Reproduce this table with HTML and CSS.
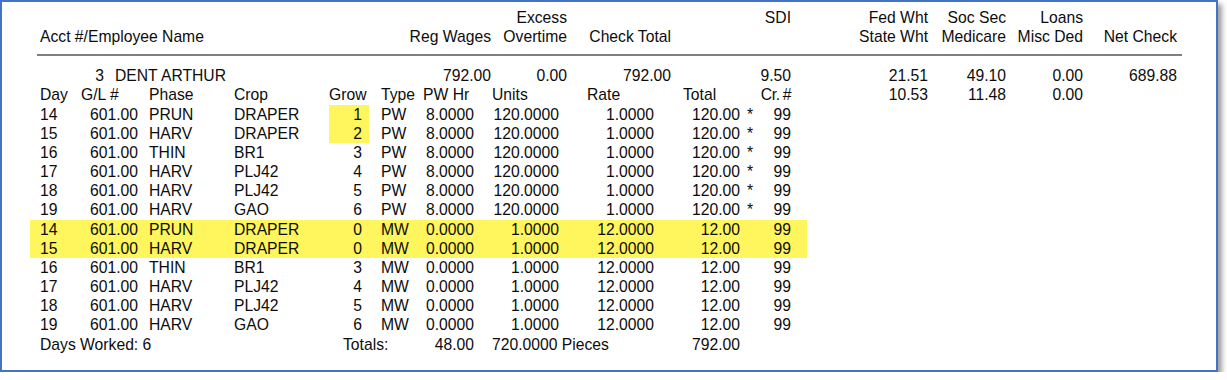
FILE: index.html
```html
<!DOCTYPE html>
<html lang="en">
<head>
<meta charset="utf-8">
<title>Payroll Register</title>
<link rel="stylesheet" href="styles.css">
</head>
<body>
<div class="frame">
  <div class="cut"><span>Crew: 374</span></div>

  <div class="head">
    <span></span><span></span><span>Excess</span><span></span><span>SDI</span><span>Fed Wht</span><span>Soc Sec</span><span>Loans</span><span></span>
    <span class="name">Acct #/Employee Name</span><span>Reg Wages</span><span>Overtime</span><span>Check Total</span><span></span><span>State Wht</span><span>Medicare</span><span>Misc Ded</span><span>Net Check</span>
  </div>

  <div class="rule"></div>

  <div class="body">
    <div class="left">
      <div class="emp">
        <span class="num">3</span><span class="ename">DENT ARTHUR</span><span>792.00</span><span>0.00</span><span>792.00</span><span>9.50</span>
      </div>

      <div class="dt th">
        <span class="d">Day</span><span class="gl">G/L #</span><span class="ph">Phase</span><span class="cp">Crop</span><span class="gr">Grow</span><span class="ty">Type</span><span class="pw">PW Hr</span><span class="un">Units</span><span class="ra">Rate</span><span class="to">Total</span><span class="st"></span><span class="cn">Cr. #</span>
      </div>

      <div class="dt"><span class="d">14</span><span class="gl">601.00</span><span class="ph">PRUN</span><span class="cp">DRAPER</span><span class="gr mark">1</span><span class="ty">PW</span><span class="pw">8.0000</span><span class="un">120.0000</span><span class="ra">1.0000</span><span class="to">120.00</span><span class="st">*</span><span class="cn">99</span></div>
      <div class="dt"><span class="d">15</span><span class="gl">601.00</span><span class="ph">HARV</span><span class="cp">DRAPER</span><span class="gr mark">2</span><span class="ty">PW</span><span class="pw">8.0000</span><span class="un">120.0000</span><span class="ra">1.0000</span><span class="to">120.00</span><span class="st">*</span><span class="cn">99</span></div>
      <div class="dt"><span class="d">16</span><span class="gl">601.00</span><span class="ph">THIN</span><span class="cp">BR1</span><span class="gr">3</span><span class="ty">PW</span><span class="pw">8.0000</span><span class="un">120.0000</span><span class="ra">1.0000</span><span class="to">120.00</span><span class="st">*</span><span class="cn">99</span></div>
      <div class="dt"><span class="d">17</span><span class="gl">601.00</span><span class="ph">HARV</span><span class="cp">PLJ42</span><span class="gr">4</span><span class="ty">PW</span><span class="pw">8.0000</span><span class="un">120.0000</span><span class="ra">1.0000</span><span class="to">120.00</span><span class="st">*</span><span class="cn">99</span></div>
      <div class="dt"><span class="d">18</span><span class="gl">601.00</span><span class="ph">HARV</span><span class="cp">PLJ42</span><span class="gr">5</span><span class="ty">PW</span><span class="pw">8.0000</span><span class="un">120.0000</span><span class="ra">1.0000</span><span class="to">120.00</span><span class="st">*</span><span class="cn">99</span></div>
      <div class="dt"><span class="d">19</span><span class="gl">601.00</span><span class="ph">HARV</span><span class="cp">GAO</span><span class="gr">6</span><span class="ty">PW</span><span class="pw">8.0000</span><span class="un">120.0000</span><span class="ra">1.0000</span><span class="to">120.00</span><span class="st">*</span><span class="cn">99</span></div>
      <div class="dt hl"><span class="d">14</span><span class="gl">601.00</span><span class="ph">PRUN</span><span class="cp">DRAPER</span><span class="gr">0</span><span class="ty">MW</span><span class="pw">0.0000</span><span class="un">1.0000</span><span class="ra">12.0000</span><span class="to">12.00</span><span class="st"></span><span class="cn">99</span></div>
      <div class="dt hl"><span class="d">15</span><span class="gl">601.00</span><span class="ph">HARV</span><span class="cp">DRAPER</span><span class="gr">0</span><span class="ty">MW</span><span class="pw">0.0000</span><span class="un">1.0000</span><span class="ra">12.0000</span><span class="to">12.00</span><span class="st"></span><span class="cn">99</span></div>
      <div class="dt"><span class="d">16</span><span class="gl">601.00</span><span class="ph">THIN</span><span class="cp">BR1</span><span class="gr">3</span><span class="ty">MW</span><span class="pw">0.0000</span><span class="un">1.0000</span><span class="ra">12.0000</span><span class="to">12.00</span><span class="st"></span><span class="cn">99</span></div>
      <div class="dt"><span class="d">17</span><span class="gl">601.00</span><span class="ph">HARV</span><span class="cp">PLJ42</span><span class="gr">4</span><span class="ty">MW</span><span class="pw">0.0000</span><span class="un">1.0000</span><span class="ra">12.0000</span><span class="to">12.00</span><span class="st"></span><span class="cn">99</span></div>
      <div class="dt"><span class="d">18</span><span class="gl">601.00</span><span class="ph">HARV</span><span class="cp">PLJ42</span><span class="gr">5</span><span class="ty">MW</span><span class="pw">0.0000</span><span class="un">1.0000</span><span class="ra">12.0000</span><span class="to">12.00</span><span class="st"></span><span class="cn">99</span></div>
      <div class="dt"><span class="d">19</span><span class="gl">601.00</span><span class="ph">HARV</span><span class="cp">GAO</span><span class="gr">6</span><span class="ty">MW</span><span class="pw">0.0000</span><span class="un">1.0000</span><span class="ra">12.0000</span><span class="to">12.00</span><span class="st"></span><span class="cn">99</span></div>

      <div class="dt tot">
        <span class="days">Days Worked: 6</span><span class="tlabel">Totals:</span><span class="pw">48.00</span><span class="pieces">720.0000 Pieces</span><span class="to">792.00</span>
      </div>
    </div>

    <div class="ded">
      <span>21.51</span><span>49.10</span><span>0.00</span><span>689.88</span>
      <span>10.53</span><span>11.48</span><span>0.00</span><span></span>
    </div>
  </div>
</div>
</body>
</html>
```

FILE: styles.css
```css
html, body {
  margin: 0;
  padding: 0;
  background: #ffffff;
}

body {
  font-family: "Liberation Sans", Arial, sans-serif;
  font-size: 15.7px;
  line-height: 19.15px;
  color: #0d0d0d;
}

.frame {
  box-sizing: border-box;
  width: 1218px;
  height: 372px;
  border: 2px solid #4472c4;
  background: #ffffff;
  box-shadow: 4px 4px 5px rgba(0, 0, 0, 0.38);
  padding: 0 0 0 38px;
  overflow: hidden;
}

.cut {
  height: 2px;
  overflow: hidden;
  padding-left: 96px;
}

.cut span {
  display: block;
  line-height: 16px;
  margin-top: -13px;
  color: #9a9a9a;
}

.head {
  display: grid;
  grid-template-columns: 360px 91px 76px 104px 120px 137px 78px 77px 94px;
  margin-top: 4px;
  text-align: right;
  white-space: nowrap;
}

.head .name {
  text-align: left;
}

.rule {
  height: 2px;
  width: 1145px;
  margin: 8px 0 0 -3px;
  background: #7f7f7f;
}

.body {
  display: grid;
  grid-template-columns: 751px 386px;
  margin-top: 10px;
}

.emp {
  display: grid;
  grid-template-columns: 64px 296px 91px 76px 104px 120px;
  text-align: right;
  white-space: nowrap;
}

.emp .ename {
  text-align: left;
  padding-left: 11px;
}

.ded {
  display: grid;
  grid-template-columns: 137px 78px 77px 94px;
  grid-auto-rows: 19.15px;
  text-align: right;
}

.dt {
  display: grid;
  grid-template-columns: 41px 57px 96px 95px 40px 54px 51px 85px 95px 86px 17px 34px;
  white-space: nowrap;
}

.dt > span {
  text-align: left;
}

.dt .gl,
.dt .gr,
.dt .pw,
.dt .un,
.dt .ra,
.dt .to,
.dt .cn {
  text-align: right;
}

.dt .ph { padding-left: 11px; }
.dt .ty { padding-left: 12px; }
.dt .gr { padding-right: 7px; }
.dt .st { padding-left: 7px; }

.dt .mark {
  background: #fff55c;
}

.dt.hl {
  background: #fff55c;
  margin: 0 -16px 0 -10px;
  padding: 0 16px 0 10px;
}

.th .gl,
.th .gr,
.th .pw,
.th .un,
.th .ra,
.th .to {
  text-align: left;
}

.th .gr { padding-right: 0; }
.th .un { padding-left: 18px; }
.th .ra { padding-left: 28px; }
.th .to { padding-left: 29px; }

.th .cn {
  letter-spacing: -0.4px;
  word-spacing: -1px;
}

.tot .days {
  grid-column: 1 / 5;
}

.tot .tlabel {
  grid-column: 5 / 7;
  padding-left: 14px;
}

.tot .pw {
  grid-column: 7;
}

.tot .pieces {
  grid-column: 8 / 10;
  padding-left: 18px;
  text-align: left;
}

.tot .to {
  grid-column: 10;
}
```
